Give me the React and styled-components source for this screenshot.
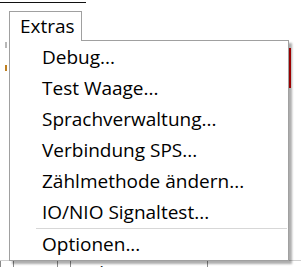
import React from "react";
import styled, { createGlobalStyle } from "styled-components";

const Global = createGlobalStyle`
  html, body { margin: 0; padding: 0; background: #fff; }
  body { font-family: "Open Sans", "Noto Sans", "Liberation Sans", sans-serif; }
`;

const Page = styled.div`
  position: relative;
  width: 301px;
  height: 267px;
  overflow: hidden;
  background: #fff;
  display: flex;
  flex-direction: column;
`;

const TopRule = styled.div`
  margin-top: 2px;
  width: 86px;
  height: 1px;
  background: #111;
`;

const Middle = styled.div`
  flex: 1;
  display: flex;
  justify-content: space-between;
`;

const LeftMarks = styled.div`
  width: 3px;
  margin-left: 5px;
  display: flex;
  flex-direction: column;
  gap: 17px;
  padding-top: 39px;
`;

const Mark = styled.div`
  width: 2px;
  height: ${(p) => p.$h}px;
  background: ${(p) => p.$c};
`;

const RedBar = styled.div`
  width: 3px;
  height: 40px;
  margin-top: 45px;
  margin-right: 10px;
  background: #e00000;
`;

const TableRow = styled.div`
  height: 6px;
  display: grid;
  grid-template-columns: 13px 44px 13px 137px 1fr;
  border-top: 1px solid #d0d0d0;
`;

const Cell = styled.div`
  border-left: 1px solid #8a8a8a;
  font-size: 19px;
  line-height: 24px;
  color: #222;
  padding-left: 6px;
  white-space: nowrap;
  overflow: hidden;
  min-width: 0;
`;

const Overlay = styled.div`
  position: absolute;
  left: 9px;
  top: 11px;
  display: flex;
  flex-direction: column;
  align-items: flex-start;
`;

const Tab = styled.div`
  position: relative;
  z-index: 2;
  box-sizing: border-box;
  width: 73px;
  height: 30px;
  margin-bottom: -1px;
  border: 1px solid #a0a0a0;
  border-bottom: none;
  background: #fff;
  padding-left: 10px;
  font-size: 19px;
  line-height: 28px;
  color: #000;
`;

const Panel = styled.div`
  position: relative;
  z-index: 1;
  box-sizing: border-box;
  width: 280px;
  border: 1px solid #a0a0a0;
  background: #fff;
  padding-top: 1px;
  box-shadow: 3px 3px 2px rgba(0, 0, 0, 0.32);
  display: flex;
  flex-direction: column;
`;

const Item = styled.div`
  height: 31px;
  line-height: 31px;
  padding-left: 32px;
  font-size: 19px;
  color: #000;
  white-space: nowrap;
`;

const Separator = styled.div`
  height: 1px;
  margin: 0 1px 0 26px;
  background: #d7d7d7;
`;

const items = [
  "Debug...",
  "Test Waage...",
  "Sprachverwaltung...",
  "Verbindung SPS...",
  "Zählmethode ändern...",
  "IO/NIO Signaltest...",
];

export default function App() {
  return (
    <>
      <Global />
      <Page>
        <TopRule />
        <Middle>
          <LeftMarks>
            <Mark $h={6} $c="#b8b8b8" />
            <Mark $h={6} $c="#c08020" />
          </LeftMarks>
          <RedBar />
        </Middle>
        <TableRow>
          <Cell />
          <Cell />
          <Cell />
          <Cell>Kaltsequenznr.</Cell>
          <Cell>10000001</Cell>
        </TableRow>
        <Overlay>
          <Tab>Extras</Tab>
          <Panel>
            {items.map((t) => (
              <Item key={t}>{t}</Item>
            ))}
            <Separator />
            <Item>Optionen...</Item>
          </Panel>
        </Overlay>
      </Page>
    </>
  );
}
